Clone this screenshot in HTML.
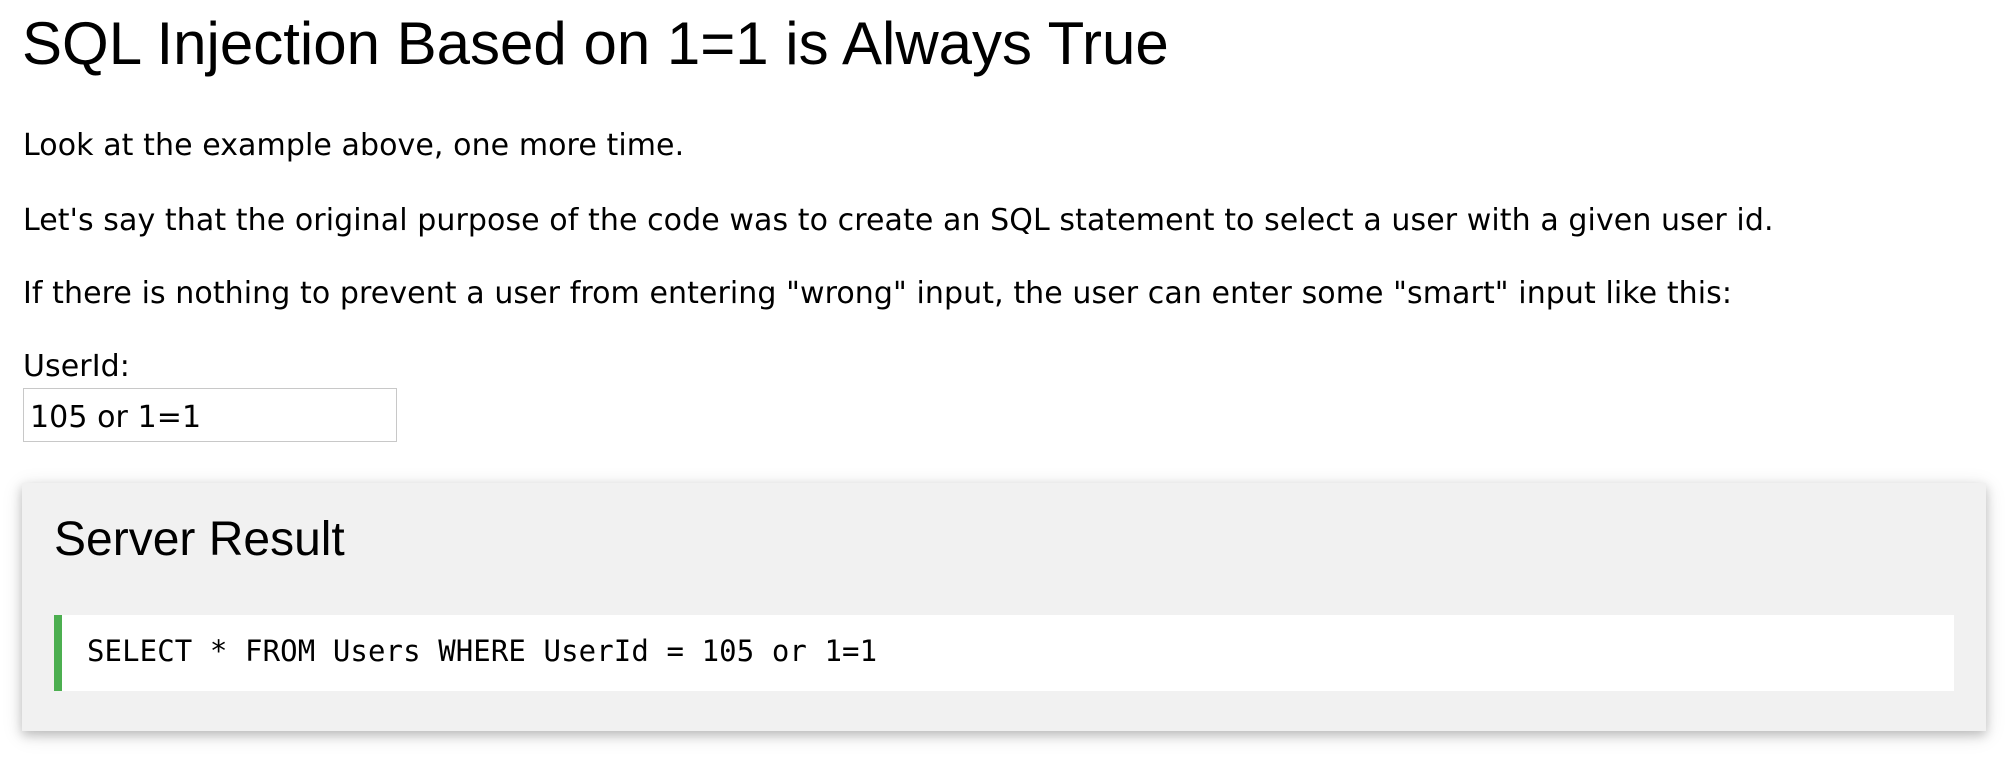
<!DOCTYPE html>
<html><head><meta charset="utf-8"><style>
html,body{margin:0;padding:0;background:#fff;width:2014px;height:758px;overflow:hidden;color:#000}
.t{position:absolute;white-space:nowrap;line-height:1}
h1{position:absolute;left:22px;top:14px;margin:0;font:400 60px "Liberation Sans",Arial,sans-serif;line-height:1;white-space:nowrap}
.p{font-family:"DejaVu Sans",Verdana,sans-serif;font-size:30px;left:23px;letter-spacing:0.08px}
.inp{position:absolute;left:23px;top:388px;width:372px;height:52px;border:1px solid #c8c8c8;box-sizing:content-box}
.box{position:absolute;left:22px;top:483px;width:1964px;height:248px;background:#f1f1f1;box-shadow:0 4px 10px rgba(0,0,0,.2),0 4px 20px rgba(0,0,0,.12)}
.h2{position:absolute;left:54px;top:516px;font:400 48px "Liberation Sans",Arial,sans-serif;line-height:1;white-space:nowrap}
.code{position:absolute;left:54px;top:615px;width:1900px;height:76px;background:#fff;border-left:8px solid #4caf50;box-sizing:border-box}
.ct{position:absolute;left:87px;top:637px;font:400 29px "DejaVu Sans Mono",Menlo,monospace;line-height:1;white-space:nowrap;letter-spacing:0.1px}
</style></head><body>
<h1>SQL Injection Based on 1=1 is Always True</h1>
<div class="t p" style="top:131px">Look at the example above, one more time.</div>
<div class="t p" style="top:206px">Let's say that the original purpose of the code was to create an SQL statement to select a user with a given user id.</div>
<div class="t p" style="top:279px">If there is nothing to prevent a user from entering "wrong" input, the user can enter some "smart" input like this:</div>
<div class="t p" style="top:352px">UserId:</div>
<div class="inp"></div>
<div class="t p" style="top:403px;left:30px">105 or 1=1</div>
<div class="box"></div>
<div class="h2">Server Result</div>
<div class="code"></div>
<div class="ct">SELECT * FROM Users WHERE UserId = 105 or 1=1</div>
</body></html>
